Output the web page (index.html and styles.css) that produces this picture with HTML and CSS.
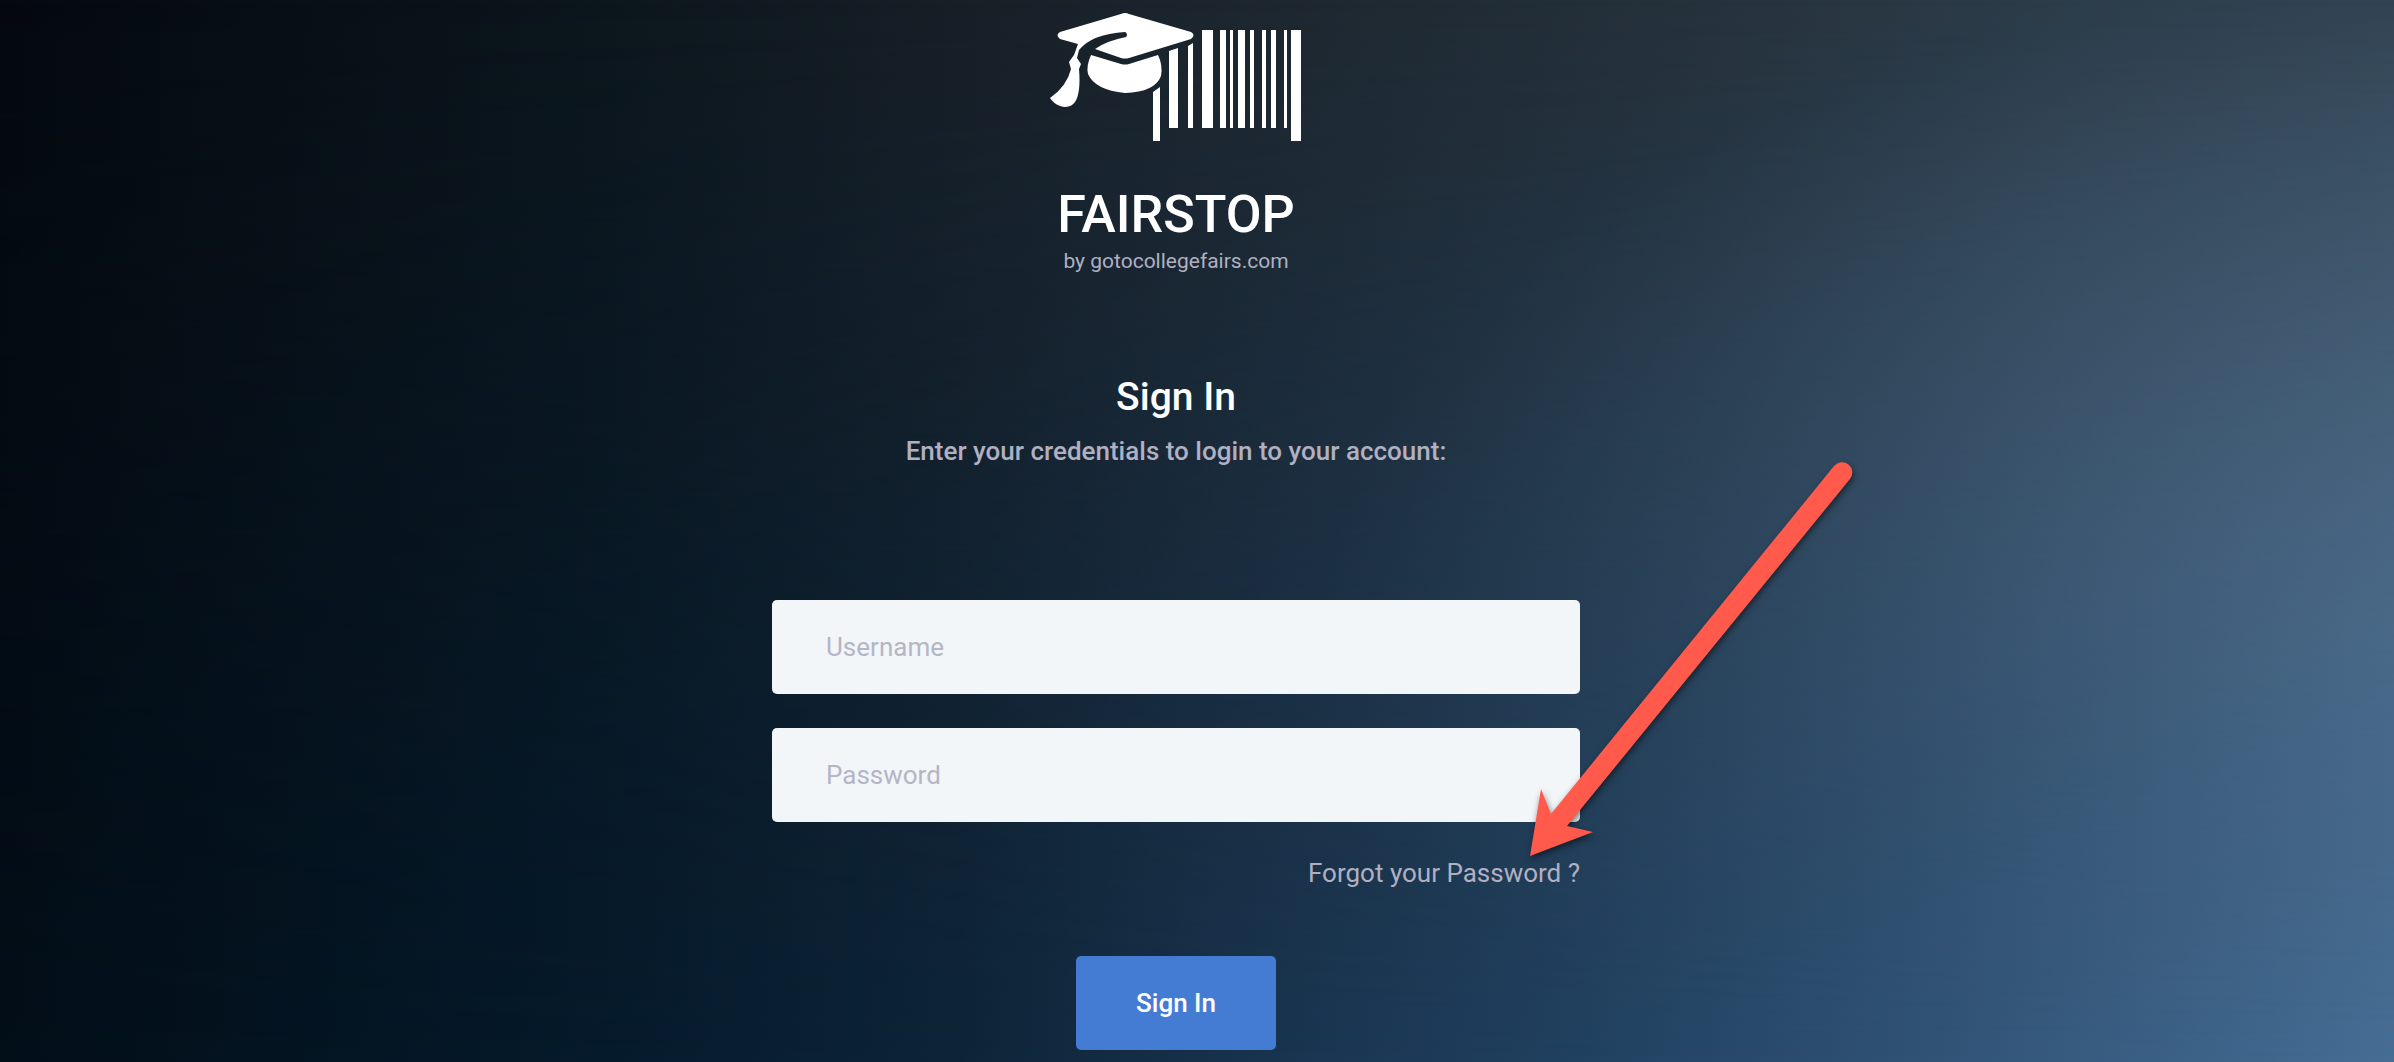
FILE: index.html
```html
<!DOCTYPE html>
<html lang="en">
<head>
  <meta charset="UTF-8">
  <title>Sign In - FAIRSTOP</title>
  <meta name="viewport" content="width=device-width, initial-scale=1.0">
  <link rel="stylesheet" href="styles.css">
</head>
<body>

<main class="login">
  <svg class="logo" viewBox="0 0 252 132" role="img" aria-label="FAIRSTOP logo">
    <!-- Cap -->
    <path d="M10 20 L71 2 Q75 0 79 2 L141 20 Q146 23 141 27 L79 46 Q75 47 71 46 L45 37 Q56 29 76 25 A3 3 0 0 0 75 20 Q42 22 29 38 L27 46 L31 52 L29 57 Q31 81 25 90 Q20 97 10 94 Q3 91 0 86 Q17 74 21 57 L19 50 L24 43 L28 32 L10 27 Q5 23 10 20 Z"/>
    <path d="M41 43 L71 52 Q75 53 79 52 L108 43 Q113 53 111 64 Q105 80 75 81 Q45 78 38 62 Q36 54 41 43 Z"/>
    <!-- Barcode -->
    <path d="M103 80 L110 75 V129 H103 Z M119 39 L128 36 V116 H119 Z M138 34 L143 31 V116 H138 Z"/>
    <path d="M152 18 h11 v98 h-11 Z M170 18 h6 v98 h-6 Z M180 18 h3 v98 h-3 Z M188 18 h7 v98 h-7 Z M200 18 h4 v98 h-4 Z M212 18 h4 v98 h-4 Z M221 18 h5 v98 h-5 Z M234 18 h3 v98 h-3 Z M241 18 h10 v111 h-10 Z"/>
  </svg>

  <h1 class="brand">FAIRSTOP</h1>
  <p class="byline">by gotocollegefairs.com</p>

  <h2 class="title">Sign In</h2>
  <p class="subtitle">Enter your credentials to login to your account:</p>

  <form class="login-form">
    <input type="text" name="username" placeholder="Username" aria-label="Username">
    <input type="password" name="password" placeholder="Password" aria-label="Password">
    <div class="forgot">
      <a href="#">Forgot your Password ?</a>
      <!-- Arrow pointing at the forgot link -->
      <svg class="arrow" viewBox="0 0 340 410" aria-hidden="true">
        <path d="M10 396 L21 329 L31 354 L314 6 A10 10 0 0 1 330 19 L47 366 L73 372 Z"/>
      </svg>
    </div>
    <button type="submit" class="submit-btn">Sign In</button>
  </form>
</main>

</body>
</html>
```
FILE: styles.css
```css
* {
  box-sizing: border-box;
}

body {
  font-family: Roboto, sans-serif;
  margin: 0;
  min-height: 100vh;
  position: relative;
  z-index: 0;
  color: #fff;
  background:
    radial-gradient(ellipse 45% 60% at 100% 60%, rgba(120, 145, 170, 0.4), transparent),
    linear-gradient(to right, #05090f 0%, #0c161d 25%, #171f27 40%, #1c252d 50%, #25313b 70%, #2c3c49 85%, #324453 100%);
}

/* Blue tint that grows towards the bottom */
body::before {
  content: "";
  position: absolute;
  inset: 0;
  z-index: -1;
  background: linear-gradient(to right, #020e18 0%, #051a2b 25%, #0d2438 40%, #16304a 50%, #20405f 65%, #2f5275 80%, #466d94 100%);
  -webkit-mask-image: linear-gradient(to bottom, transparent, rgba(0, 0, 0, 0.5) 50%, #000);
  mask-image: linear-gradient(to bottom, transparent, rgba(0, 0, 0, 0.5) 50%, #000);
}

.login {
  display: flex;
  flex-direction: column;
  align-items: center;
  padding: 12px 42px 12px 0;
}

.logo {
  width: 252px;
  height: 132px;
  fill: #fff;
}

.brand {
  margin: 41px 0 0;
  font-size: 52px;
  font-weight: 500;
  line-height: 60px;
}

.byline {
  margin: 3px 0 0;
  color: #b0b0c2;
  font-size: 21px;
  line-height: 26px;
}

.title {
  margin: 97px 0 0;
  font-size: 39px;
  font-weight: 500;
  line-height: 52px;
}

.subtitle {
  margin: 11px 0 0;
  color: #b0b0c2;
  font-size: 26px;
  font-weight: 500;
  line-height: 34px;
}

.login-form {
  display: flex;
  flex-direction: column;
  gap: 34px;
  width: 100%;
  max-width: 808px;
  margin-top: 132px;
}

.login-form input {
  width: 100%;
  height: 94px;
  padding: 0 54px;
  border: none;
  border-radius: 5px;
  background: #f2f6f9;
  color: #575962;
  font-family: inherit;
  font-size: 26px;
}

.login-form input::placeholder {
  color: #b5b5c6;
}

.forgot {
  position: relative;
  text-align: right;
  font-size: 26px;
  line-height: 34px;
}

.forgot a {
  color: #b0b0c2;
  text-decoration: none;
}

.arrow {
  position: absolute;
  right: -280px;
  bottom: 20px;
  width: 340px;
  height: 410px;
  fill: #ff5a4c;
  filter: drop-shadow(1px 3px 3px rgba(0, 0, 0, 0.5));
  pointer-events: none;
}

.submit-btn {
  align-self: center;
  width: 200px;
  height: 94px;
  margin-top: 32px;
  border: none;
  border-radius: 5px;
  background: #447cd4;
  color: #fff;
  font-family: inherit;
  font-size: 26px;
  font-weight: 500;
  cursor: pointer;
}
```
